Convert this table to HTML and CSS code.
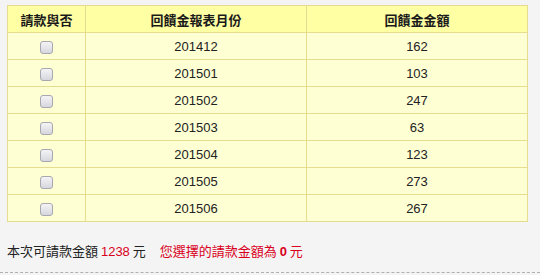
FILE: index.html
```html
<!DOCTYPE html>
<html>
<head>
<meta charset="utf-8">
<link rel="stylesheet" href="styles.css">
</head>
<body>
<div class="page">
  <table class="grid">
    <colgroup>
      <col class="c1"><col class="c2"><col class="c3">
    </colgroup>
    <thead>
      <tr><th>請款與否</th><th>回饋金報表月份</th><th>回饋金金額</th></tr>
    </thead>
    <tbody>
      <tr><td><input type="checkbox" class="chk"></td><td>201412</td><td>162</td></tr>
      <tr><td><input type="checkbox" class="chk"></td><td>201501</td><td>103</td></tr>
      <tr><td><input type="checkbox" class="chk"></td><td>201502</td><td>247</td></tr>
      <tr><td><input type="checkbox" class="chk"></td><td>201503</td><td>63</td></tr>
      <tr><td><input type="checkbox" class="chk"></td><td>201504</td><td>123</td></tr>
      <tr><td><input type="checkbox" class="chk"></td><td>201505</td><td>273</td></tr>
      <tr><td><input type="checkbox" class="chk"></td><td>201506</td><td>267</td></tr>
    </tbody>
  </table>
  <div class="summary">
    <span>本次可請款金額 <span class="red">1238</span> 元</span>
    <span class="red">您選擇的請款金額為 <b>0</b> 元</span>
  </div>
</div>
<div class="dash"></div>
</body>
</html>
```
FILE: styles.css
```css
html, body {
  margin: 0;
  padding: 0;
  background: #f4f4f4;
  font-family: "Liberation Sans", Arial, "Noto Sans CJK TC", sans-serif;
  font-size: 13px;
  color: #222;
}
.page {
  padding: 5px 0 0 7px;
  height: 267px;
  box-sizing: border-box;
}
.grid {
  border-collapse: collapse;
  width: 520px;
  table-layout: fixed;
}
.c1 { width: 78px; }
.c2 { width: 221px; }
.c3 { width: 221px; }
.grid th, .grid td {
  border: 1px solid #e6dc90;
  text-align: center;
  padding: 0;
}
.grid th {
  background: #ffffa4;
  height: 26px;
  font-weight: bold;
  font-family: "Noto Sans CJK TC", sans-serif;
  font-size: 13px;
  color: #1a1a1a;
}
.grid td {
  background: #ffffd4;
  height: 26px;
  font-size: 13px;
  color: #222;
}
.chk {
  -webkit-appearance: none;
  appearance: none;
  width: 13px;
  height: 13px;
  margin: 0;
  vertical-align: middle;
  border: 1px solid #a8a8b0;
  border-radius: 3px;
  background: linear-gradient(#f4f4f6, #d6d6de);
  box-sizing: border-box;
}
.summary {
  margin-top: 20px;
  display: flex;
  gap: 14px;
  font-family: "Noto Sans CJK TC", sans-serif;
  font-size: 13px;
  line-height: 18px;
  color: #222;
}
.red { color: #d9001b; }
.red b { font-family: "Liberation Sans", Arial, sans-serif; font-weight: bold; }
.summary .red:first-child, .summary span .red {
  font-family: "Liberation Sans", Arial, sans-serif;
}
.dash {
  border-top: 1px dashed #b0b0b0;
  margin: 5px 0 0 0;
}
```
